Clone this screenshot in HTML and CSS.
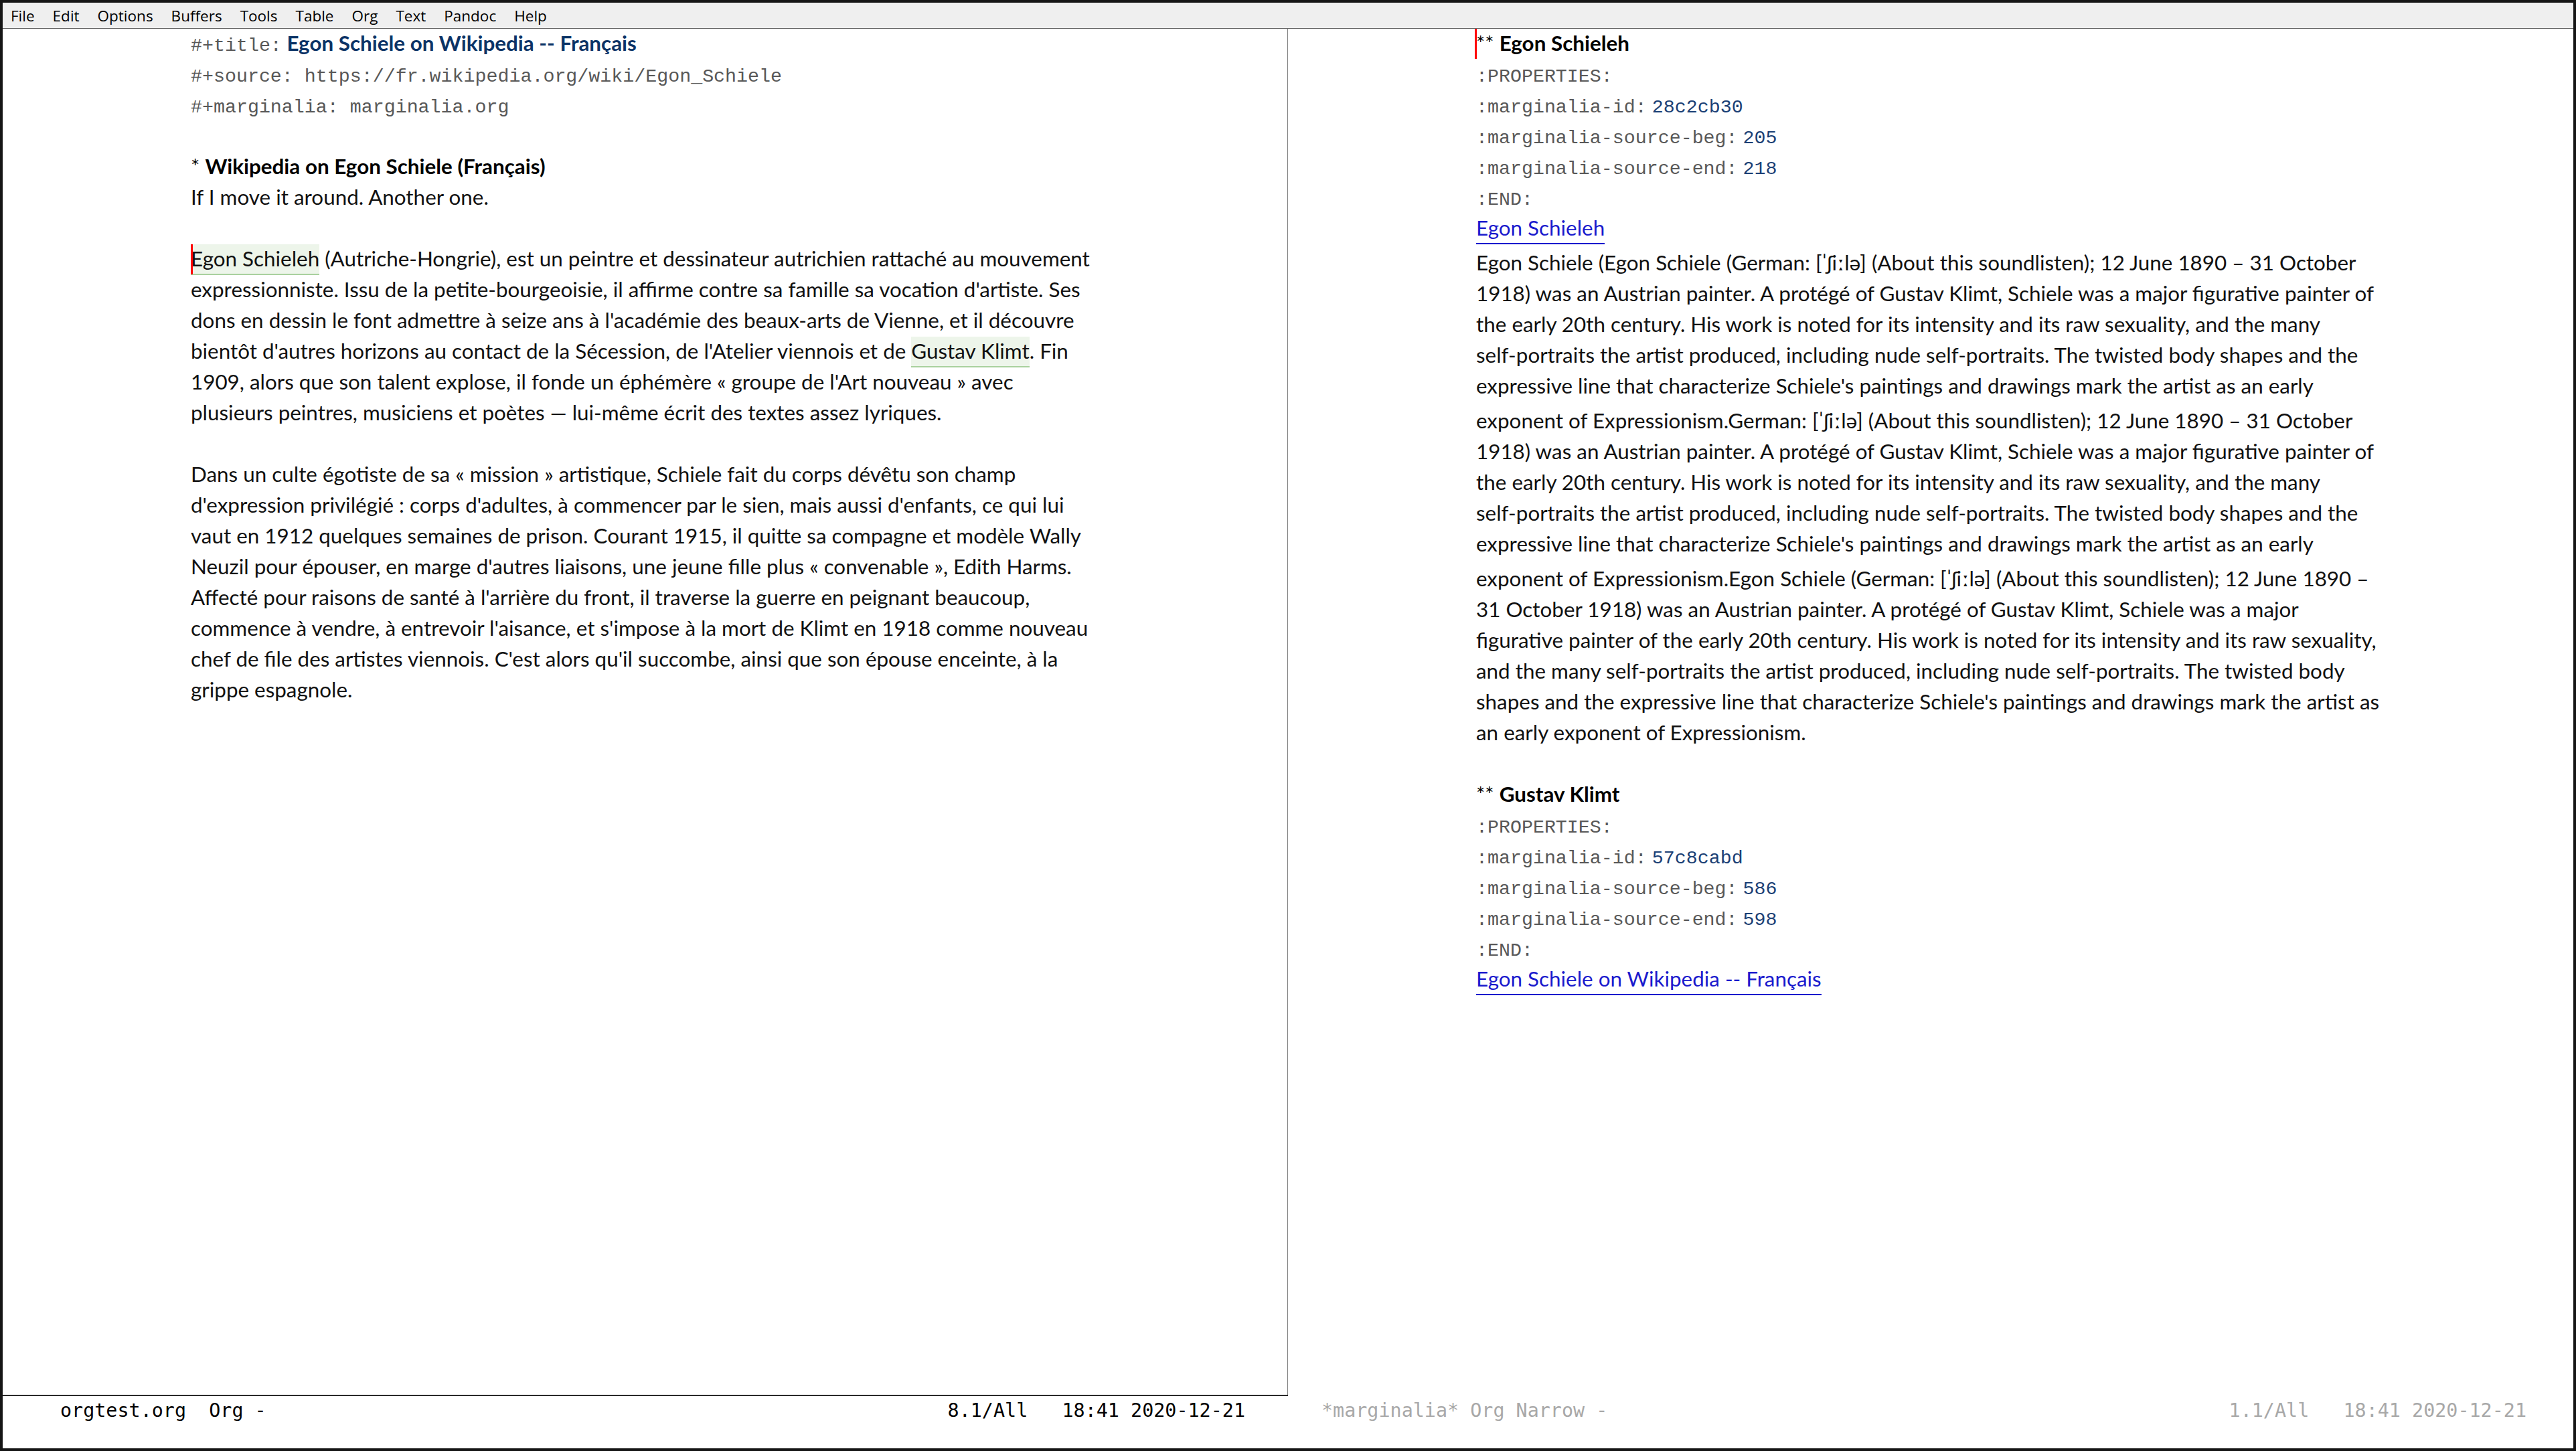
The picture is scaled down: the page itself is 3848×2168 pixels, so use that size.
FILE: index.html
```html
<!DOCTYPE html>
<html lang="fr">
<head>
<meta charset="utf-8">
<title>orgtest.org - Emacs</title>
<link rel="stylesheet" href="styles.css">
</head>
<body>
<div class="frame">
  <div class="emacs">
    <div class="menubar">
      <span>File</span><span>Edit</span><span>Options</span><span>Buffers</span><span>Tools</span><span>Table</span><span>Org</span><span>Text</span><span>Pandoc</span><span>Help</span>
    </div>
    <div class="main">
      <div class="window win-left">
        <div class="buffer">
          <div class="l"><span class="mono">#+title:</span><span class="title"> Egon Schiele on Wikipedia -- Français</span></div>
          <div class="l"><span class="mono">#+source: https://fr.wikipedia.org/wiki/Egon_Schiele</span></div>
          <div class="l"><span class="mono">#+marginalia: marginalia.org</span></div>
          <div class="l"> </div>
          <div class="l head"><span class="stars">* </span>Wikipedia on Egon Schiele (Français)</div>
          <div class="l">If I move it around. Another one.</div>
          <div class="l"> </div>
          <div class="l"><span class="hl cursor">Egon Schieleh</span> (Autriche-Hongrie), est un peintre et dessinateur autrichien rattaché au mouvement</div>
          <div class="l">expressionniste. Issu de la petite-bourgeoisie, il affirme contre sa famille sa vocation d'artiste. Ses</div>
          <div class="l">dons en dessin le font admettre à seize ans à l'académie des beaux-arts de Vienne, et il découvre</div>
          <div class="l">bientôt d'autres horizons au contact de la Sécession, de l'Atelier viennois et de <span class="hl">Gustav Klimt</span>. Fin</div>
          <div class="l">1909, alors que son talent explose, il fonde un éphémère « groupe de l'Art nouveau » avec</div>
          <div class="l">plusieurs peintres, musiciens et poètes — lui-même écrit des textes assez lyriques.</div>
          <div class="l"> </div>
          <div class="l">Dans un culte égotiste de sa « mission » artistique, Schiele fait du corps dévêtu son champ</div>
          <div class="l">d'expression privilégié : corps d'adultes, à commencer par le sien, mais aussi d'enfants, ce qui lui</div>
          <div class="l">vaut en 1912 quelques semaines de prison. Courant 1915, il quitte sa compagne et modèle Wally</div>
          <div class="l">Neuzil pour épouser, en marge d'autres liaisons, une jeune fille plus « convenable », Edith Harms.</div>
          <div class="l">Affecté pour raisons de santé à l'arrière du front, il traverse la guerre en peignant beaucoup,</div>
          <div class="l">commence à vendre, à entrevoir l'aisance, et s'impose à la mort de Klimt en 1918 comme nouveau</div>
          <div class="l">chef de file des artistes viennois. C'est alors qu'il succombe, ainsi que son épouse enceinte, à la</div>
          <div class="l">grippe espagnole.</div>
        </div>
        <div class="modeline">
          <span>orgtest.org  Org -</span><span>8.1/All   18:41 2020-12-21</span>
        </div>
      </div>
      <div class="window win-right">
        <div class="buffer">
          <div class="l head cur"><span class="stars">** </span>Egon Schieleh</div>
          <div class="l"><span class="mono">:PROPERTIES:</span></div>
          <div class="l"><span class="mono">:marginalia-id:</span> <span class="mono val">28c2cb30</span></div>
          <div class="l"><span class="mono">:marginalia-source-beg:</span> <span class="mono val">205</span></div>
          <div class="l"><span class="mono">:marginalia-source-end:</span> <span class="mono val">218</span></div>
          <div class="l"><span class="mono">:END:</span></div>
          <div class="l"><span class="link">Egon Schieleh</span></div>
          <div class="l ipa">Egon Schiele (Egon Schiele (German: [ˈʃiːlə] (About this soundlisten); 12 June 1890 – 31 October</div>
          <div class="l">1918) was an Austrian painter. A protégé of Gustav Klimt, Schiele was a major figurative painter of</div>
          <div class="l">the early 20th century. His work is noted for its intensity and its raw sexuality, and the many</div>
          <div class="l">self-portraits the artist produced, including nude self-portraits. The twisted body shapes and the</div>
          <div class="l">expressive line that characterize Schiele's paintings and drawings mark the artist as an early</div>
          <div class="l ipa">exponent of Expressionism.German: [ˈʃiːlə] (About this soundlisten); 12 June 1890 – 31 October</div>
          <div class="l">1918) was an Austrian painter. A protégé of Gustav Klimt, Schiele was a major figurative painter of</div>
          <div class="l">the early 20th century. His work is noted for its intensity and its raw sexuality, and the many</div>
          <div class="l">self-portraits the artist produced, including nude self-portraits. The twisted body shapes and the</div>
          <div class="l">expressive line that characterize Schiele's paintings and drawings mark the artist as an early</div>
          <div class="l ipa">exponent of Expressionism.Egon Schiele (German: [ˈʃiːlə] (About this soundlisten); 12 June 1890 –</div>
          <div class="l">31 October 1918) was an Austrian painter. A protégé of Gustav Klimt, Schiele was a major</div>
          <div class="l">figurative painter of the early 20th century. His work is noted for its intensity and its raw sexuality,</div>
          <div class="l">and the many self-portraits the artist produced, including nude self-portraits. The twisted body</div>
          <div class="l">shapes and the expressive line that characterize Schiele's paintings and drawings mark the artist as</div>
          <div class="l">an early exponent of Expressionism.</div>
          <div class="l"> </div>
          <div class="l head"><span class="stars">** </span>Gustav Klimt</div>
          <div class="l"><span class="mono">:PROPERTIES:</span></div>
          <div class="l"><span class="mono">:marginalia-id:</span> <span class="mono val">57c8cabd</span></div>
          <div class="l"><span class="mono">:marginalia-source-beg:</span> <span class="mono val">586</span></div>
          <div class="l"><span class="mono">:marginalia-source-end:</span> <span class="mono val">598</span></div>
          <div class="l"><span class="mono">:END:</span></div>
          <div class="l"><span class="link">Egon Schiele on Wikipedia -- Français</span></div>
        </div>
        <div class="modeline">
          <span>*marginalia* Org Narrow -</span><span>1.1/All   18:41 2020-12-21</span>
        </div>
      </div>
    </div>
    <div class="echo"></div>
  </div>
</div>
</body>
</html>
```

FILE: styles.css
```css
html, body {
  margin: 0;
  padding: 0;
}

body {
  background: #151515;
  width: 3848px;
  height: 2168px;
  overflow: hidden;
}

.frame {
  box-sizing: border-box;
  width: 3848px;
  height: 2168px;
  padding: 4px;
  display: flex;
}

.emacs {
  flex: 1;
  display: flex;
  flex-direction: column;
  background: #fff;
  min-width: 0;
}

.menubar {
  height: 38px;
  border-bottom: 1px solid #666;
  background: #efefef;
  display: flex;
  align-items: center;
  gap: 27px;
  padding-left: 12px;
  font-family: "Open Sans", "Noto Sans", sans-serif;
  font-size: 22.5px;
  color: #000;
}

.main {
  flex: 1;
  display: flex;
  min-height: 0;
}

.window {
  display: flex;
  flex-direction: column;
  min-width: 0;
}

.win-left {
  width: 1920px;
}

.win-right {
  flex: 1;
}

.buffer {
  flex: 1;
  padding-left: 281px;
  font-family: Lato, "Liberation Sans", sans-serif;
  font-size: 31.4px;
  color: #111;
  overflow: hidden;
}

.win-left .buffer {
  border-right: 1px solid #7d7d7d;
}

.l {
  height: 46px;
  line-height: 42px;
  white-space: pre;
}

.l.ipa {
  padding-top: 6px;
}

.cur {
  position: relative;
}

.cur::before,
.cursor::before {
  content: "";
  position: absolute;
  left: -2px;
  top: 0;
  width: 3px;
  height: 45px;
  background: #ff0000;
}

.cursor::before {
  left: 0;
}

.mono {
  font-family: "Liberation Mono", "DejaVu Sans Mono", monospace;
  font-size: 28.3px;
  color: #585858;
}

.mono.val {
  color: #1b3f75;
}

.title {
  color: #0b3366;
  font-weight: 700;
}

.head {
  font-weight: 700;
  color: #000;
}

.stars {
  font-weight: 400;
}

.hl {
  display: inline-block;
  position: relative;
  height: 44px;
  line-height: 42px;
  vertical-align: top;
  background: #edf5ea;
  border-bottom: 2px solid #a9d19e;
}

.link {
  display: inline-block;
  height: 44px;
  line-height: 42px;
  vertical-align: top;
  color: #1a1acd;
  border-bottom: 2px solid #1a1acd;
}

.modeline {
  box-sizing: border-box;
  height: 44px;
  border-top: 2px solid transparent;
  display: flex;
  justify-content: space-between;
  align-items: center;
  font-family: "DejaVu Sans Mono", "Liberation Mono", monospace;
  font-size: 28.4px;
  white-space: pre;
}

.win-left .modeline {
  border-top-color: #2a2a2a;
  color: #000;
  padding: 0 64px 0 86px;
}

.win-right .modeline {
  color: #a8a8a8;
  padding: 0 70px 0 50px;
}

.echo {
  height: 36px;
}
```
